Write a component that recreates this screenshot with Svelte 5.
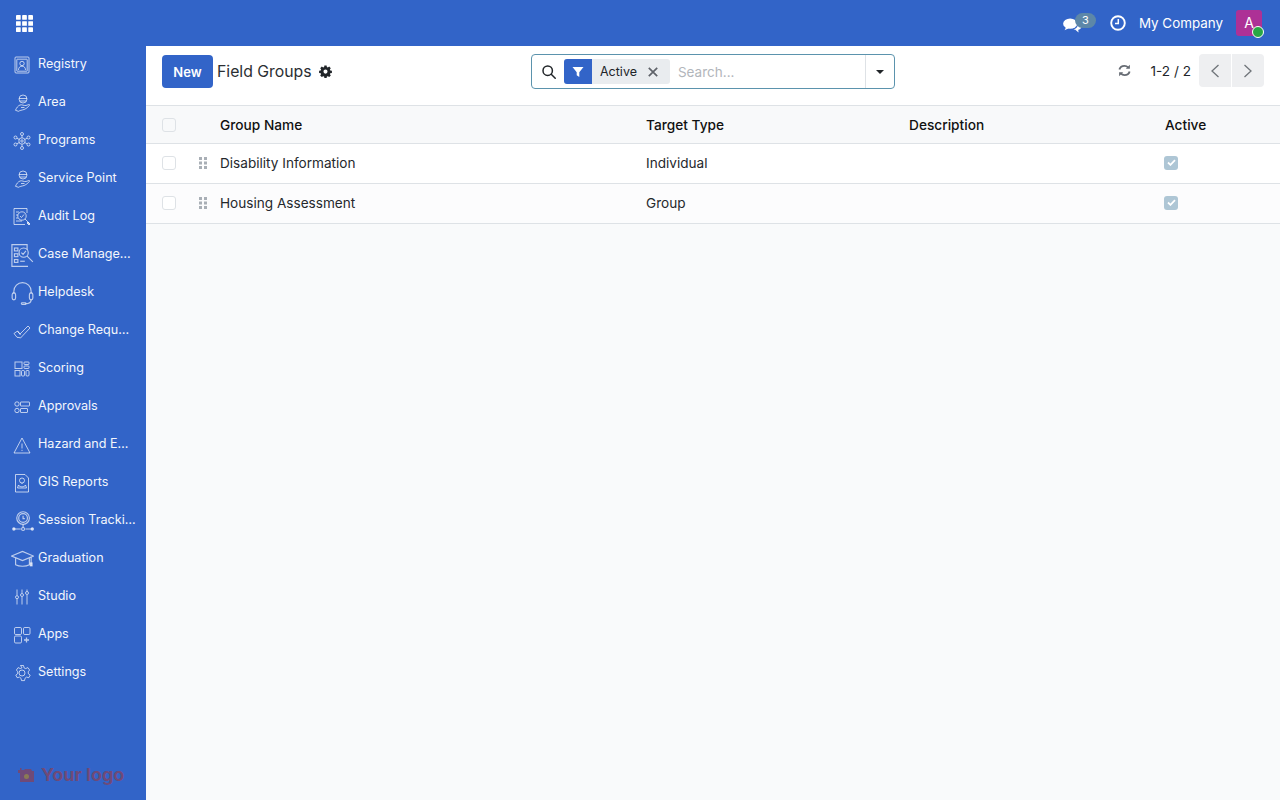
<script>
  const menu = [
    { label: 'Registry', icon: 'registry' },
    { label: 'Area', icon: 'hand' },
    { label: 'Programs', icon: 'programs' },
    { label: 'Service Point', icon: 'hand' },
    { label: 'Audit Log', icon: 'audit' },
    { label: 'Case Management', icon: 'case', big: true },
    { label: 'Helpdesk', icon: 'help', big: true },
    { label: 'Change Requests', icon: 'change' },
    { label: 'Scoring', icon: 'scoring' },
    { label: 'Approvals', icon: 'approvals' },
    { label: 'Hazard and Emergency', icon: 'hazard' },
    { label: 'GIS Reports', icon: 'gis' },
    { label: 'Session Tracking', icon: 'session', big: true },
    { label: 'Graduation', icon: 'grad', big: true },
    { label: 'Studio', icon: 'studio' },
    { label: 'Apps', icon: 'apps' },
    { label: 'Settings', icon: 'settings' }
  ];
  const rows = [
    { name: 'Disability Information', type: 'Individual' },
    { name: 'Housing Assessment', type: 'Group' }
  ];
</script>

<div class="app">
  <header class="topbar">
    <svg class="grid-icon" viewBox="0 0 18 18" width="18" height="18" fill="#fff">
      {#each [0, 6.5, 13] as y}
        {#each [0, 6.5, 13] as x}
          <rect {x} {y} width="5" height="5" rx="0.5" />
        {/each}
      {/each}
    </svg>
    <div class="systray">
      <div class="chat">
        <svg viewBox="0 0 20 16" width="19" height="15" fill="#fff">
          <ellipse cx="7.500" cy="6" rx="7.500" ry="5.500" />
          <path d="M3 10l-1.500 3 4.500-2zM13 12.500l3.500 3-.5-3.500z" />
          <path d="M15.500 5.500c2.500.6 4 2.300 4 3.800 0 1.700-1.500 3-3.800 3.400-1.200.2-3 .2-5-.7 3-.2 5.600-2.700 4.800-6.500z" />
        </svg>
        <span class="badge">3</span>
      </div>
      <svg class="clock" viewBox="0 0 16 16" width="16" height="16" fill="none" stroke="#fff">
        <circle cx="8" cy="8" r="6.800" stroke-width="1.900" />
        <path d="M8.300 4v4.500H5" stroke-width="1.500" />
      </svg>
      <span class="company">My Company</span>
      <div class="avatar">A<span class="online"></span></div>
    </div>
  </header>

  <div class="body">
    <nav class="sidebar">
      <ul class="menu">
        {#each menu as item}
          <li class="item">
            <span class="ico" class:big={item.big}>
              <svg viewBox="0 0 20 20" fill="none" stroke="currentColor" stroke-width="1">
                {#if item.icon === 'registry'}
                  <rect x="3" y="2" width="14" height="16" rx="1" />
                  <rect x="4.800" y="4.200" width="10.400" height="12" rx="0.500" />
                  <circle cx="10" cy="8.500" r="2.200" />
                  <path d="M6.500 15c0-2.500 1.500-3.800 3.500-3.800s3.500 1.300 3.500 3.800" />
                {:else if item.icon === 'hand'}
                  <circle cx="11" cy="6" r="4" />
                  <path d="M7 5.500h8M8 8h6" />
                  <path d="M8 12c2-.8 4 1 6 .5s3-1.500 3.500-.8-3 4-5.500 4.800-4 .8-5.500 1.800l-3-1c1-2.500 2.500-4.500 4.500-5.300z" />
                  <path d="M9 14.500h3.500" />
                {:else if item.icon === 'programs'}
                  <circle cx="10" cy="10" r="3.200" />
                  <circle cx="10" cy="10" r="1.200" />
                  <circle cx="10" cy="3" r="1.500" />
                  <circle cx="10" cy="17" r="1.500" />
                  <circle cx="3.500" cy="6.500" r="1.500" />
                  <circle cx="16.500" cy="6.500" r="1.500" />
                  <circle cx="3.500" cy="13.500" r="1.500" />
                  <circle cx="16.500" cy="13.500" r="1.500" />
                  <path d="M10 4.500v2.300M10 13.200v2.300M5 7.300l2.300 1.200M15 7.300l-2.300 1.200M5 12.700l2.300-1.200M15 12.700l-2.300-1.200" />
                {:else if item.icon === 'audit'}
                  <path d="M15 6V1.500H2v16h11" />
                  <circle cx="10" cy="9" r="4.200" />
                  <path d="M8 9l1.500 1.500L12 7.500M13 12l4.500 4.500" />
                  <path d="M4 5h3M4 8h2M4 11h2M4 14h6" />
                  <path d="M16 15l2 2-1 1-2-2z" fill="currentColor" />
                {:else if item.icon === 'case'}
                  <path d="M14 5V.5H.8v19h14" />
                  <rect x="3" y="3.500" width="3" height="2.500" />
                  <rect x="3" y="8.500" width="3" height="2.500" />
                  <rect x="3" y="13.500" width="3" height="2.500" />
                  <circle cx="11" cy="7.500" r="4" />
                  <path d="M9 7.500l1.500 1.500L13 6M14 10.500l5 5" />
                  <path d="M8 15h4" />
                {:else if item.icon === 'help'}
                  <path d="M2.500 10V8a7.500 7.500 0 0 1 15 0v2" />
                  <rect x="1" y="9.500" width="3" height="6" rx="1.500" />
                  <rect x="16" y="9.500" width="3" height="6" rx="1.500" />
                  <path d="M17.500 15.500c0 2.500-2 3.500-5 3.500" />
                  <rect x="9" y="18" width="4" height="1.500" rx="0.700" />
                {:else if item.icon === 'change'}
                  <path d="M2 12.500l3.500-2.500 2.500 3 8-8 2 2-9.500 10-1.500-.5-2-.2-3-3.800z" />
                  <path d="M5.500 10l3 4" />
                {:else if item.icon === 'scoring'}
                  <rect x="3" y="3" width="7" height="6.500" />
                  <rect x="12" y="3" width="5" height="2.500" rx="0.700" />
                  <rect x="12" y="7" width="5" height="2.500" rx="0.700" />
                  <rect x="3" y="11.500" width="5" height="5.500" />
                  <rect x="9.500" y="11.500" width="3" height="5.500" rx="1" />
                  <rect x="14" y="11.500" width="3" height="5.500" rx="1" />
                {:else if item.icon === 'approvals'}
                  <circle cx="5" cy="7" r="2.200" />
                  <circle cx="5" cy="13.500" r="2.200" />
                  <rect x="8.500" y="5" width="9" height="4" rx="0.500" />
                  <rect x="8.500" y="11.500" width="7" height="4" rx="0.500" />
                {:else if item.icon === 'hazard'}
                  <path d="M10 3L2 18h16z" />
                  <path d="M10 8.500v5M10 14.800v1.200" />
                {:else if item.icon === 'gis'}
                  <path d="M3.500 1.500H13l3.500 3.500v14h-13z" />
                  <circle cx="10" cy="7.500" r="2.500" />
                  <path d="M10 10v1M6.500 12c1 2.500 6 2.500 7 0l1 3H5.500z" />
                {:else if item.icon === 'session'}
                  <circle cx="10.500" cy="7" r="5.500" />
                  <circle cx="10.500" cy="7" r="3.800" />
                  <path d="M10.500 5v2.500H12M10.500 12.500v2.800M3 16.500h5.500M12.500 16.500h5.500" />
                  <circle cx="10.500" cy="16.500" r="1.300" />
                  <circle cx="2.500" cy="16.500" r="1" fill="currentColor" />
                  <circle cx="18.500" cy="16.500" r="1" fill="currentColor" />
                {:else if item.icon === 'grad'}
                  <path d="M.5 7L10 3l9.500 4-9.500 4z" />
                  <path d="M4 9v5.500c3 1.800 9 1.800 12 0V9M17.500 8v5" />
                  <rect x="16.800" y="13" width="1.500" height="2.500" fill="currentColor" />
                {:else if item.icon === 'studio'}
                  <path d="M5 2.500v6M5 12v5.500M10 2.500V6M10 10v7.500M15 2.500v2M15 8v9.500" />
                  <circle cx="5" cy="10.200" r="1.500" />
                  <circle cx="10" cy="8" r="1.500" />
                  <circle cx="15" cy="6" r="1.500" />
                {:else if item.icon === 'apps'}
                  <rect x="2.500" y="2.500" width="7" height="7" rx="1.200" />
                  <rect x="11.500" y="2.500" width="6.500" height="7" rx="1.200" />
                  <rect x="2.500" y="11" width="7" height="7" rx="1.200" />
                  <path d="M14.500 12.500v5M12 15h5" stroke-width="1.300" />
                {:else}
                  <circle cx="10" cy="10" r="3" />
                  <path d="M8.500 2.500h3l.5 2.300 1.700.8 2.200-1 1.700 2.400-1.400 1.800.2 2 1.800 1.300-1.400 2.600-2.300-.6-1.500 1.200-.5 2.300h-3l-.5-2.300-1.500-1.200-2.300.6-1.400-2.600 1.800-1.300.2-2-1.400-1.800 1.700-2.400 2.200 1 1.700-.8z" />
                {/if}
              </svg>
            </span>
            <span class="label">{item.label}</span>
          </li>
        {/each}
      </ul>
      <div class="logo">
        <svg viewBox="0 0 17 15" width="17" height="15">
          <path d="M1 2h2V0h1.500v2H7l1-1h6l1 2h2v11H3V5H1z" fill="#6f4a78" />
          <circle cx="9.500" cy="8.500" r="2.500" fill="#8a7a55" />
        </svg>
        <span>Your logo</span>
      </div>
    </nav>

    <main class="content">
      <div class="panel">
        <div class="left">
          <button class="new">New</button>
          <span class="title">Field Groups</span>
          <svg viewBox="0 0 14 14" width="13" height="13" fill="#212529">
            <path fill-rule="evenodd" d="M5.800.5h2.400l.3 1.700 1 .4L11 1.700l1.700 1.700-1 1.400.5 1 1.700.3v2.400l-1.700.3-.5 1 1 1.400-1.700 1.700-1.500-.9-1 .4-.3 1.700H5.800l-.3-1.700-1-.4-1.500.9-1.700-1.700 1-1.400-.5-1-1.700-.3V6.100l1.700-.3.5-1-1-1.400L3 1.700l1.500.9 1-.4zM7 4.900a2.200 2.200 0 1 0 0 4.400 2.200 2.200 0 0 0 0-4.400z" />
          </svg>
        </div>
        <div class="search">
          <svg class="loupe" viewBox="0 0 14 14" width="14" height="14" fill="none" stroke="#212529" stroke-width="1.500">
            <circle cx="5.700" cy="5.700" r="4.700" />
            <path d="M9.200 9.200l4 4" stroke-linecap="round" />
          </svg>
          <div class="facet">
            <span class="facet-ico">
              <svg viewBox="0 0 12 12" width="12" height="12" fill="#fff"><path d="M.5 1h11L7.300 6.300V11L4.700 9.300V6.300z" /></svg>
            </span>
            <span class="facet-text">Active</span>
            <svg class="facet-x" viewBox="0 0 10 10" width="10" height="10" stroke="#5f636a" stroke-width="1.700"><path d="M.8.800l8.400 8.400M9.200.800L.8 9.200" /></svg>
          </div>
          <span class="placeholder">Search...</span>
          <span class="caret-box"><span class="caret"></span></span>
        </div>
        <div class="right">
          <svg viewBox="0 0 14 14" width="13" height="13" fill="none" stroke="#666b73" stroke-width="2">
            <path d="M1.500 6C2.200 3.500 4.300 2 7 2c1.700 0 3 .7 4 1.800" />
            <path d="M12.500 8C11.800 10.500 9.700 12 7 12c-1.700 0-3-.7-4-1.800" />
            <path d="M12.800.8v4.400H8.400z" fill="#666b73" stroke="none" />
            <path d="M1.200 13.200V8.800h4.400z" fill="#666b73" stroke="none" />
          </svg>
          <span class="pager">1-2 / 2</span>
          <div class="pager-btns">
            <span class="pbtn"><svg viewBox="0 0 10 16" width="10" height="16" fill="none" stroke="#6f7479" stroke-width="1.300"><path d="M8.500 2L2 8l6.500 6" /></svg></span>
            <span class="pbtn"><svg viewBox="0 0 10 16" width="10" height="16" fill="none" stroke="#6f7479" stroke-width="1.300"><path d="M1.500 2L8 8l-6.500 6" /></svg></span>
          </div>
        </div>
      </div>

      <div class="row head">
        <span class="check"></span>
        <span class="cell-drag"></span>
        <span>Group Name</span>
        <span>Target Type</span>
        <span>Description</span>
        <span>Active</span>
      </div>
      {#each rows as row, i}
        <div class="row data" class:odd={i % 2 === 1}>
          <span class="check"></span>
          <span class="cell-drag">
            <svg viewBox="0 0 8 12" width="8" height="12" fill="#a9afb6">
              {#each [0, 4.500, 9] as y}
                <rect x="0" {y} width="3" height="3" />
                <rect x="5" {y} width="3" height="3" />
              {/each}
            </svg>
          </span>
          <span>{row.name}</span>
          <span>{row.type}</span>
          <span></span>
          <span class="on">
            <svg viewBox="0 0 10 8" width="9" height="7" fill="none" stroke="#fff" stroke-width="2"><path d="M1 4l2.800 2.700L9 1.300" /></svg>
          </span>
        </div>
      {/each}
    </main>
  </div>
</div>

<style>
  :global(body) {
    margin: 0;
    font-family: Inter, "Noto Sans", "Liberation Sans", sans-serif;
    color: #212529;
    font-size: 13px;
  }
  .app {
    width: 1280px;
    height: 800px;
    display: flex;
    flex-direction: column;
    overflow: hidden;
  }
  .topbar {
    height: 46px;
    flex: none;
    background: #3264c8;
    display: flex;
    align-items: center;
    justify-content: space-between;
    padding: 0 18px 0 16px;
    color: #fff;
  }
  .grid-icon {
    width: 17px;
    height: 17px;
  }
  .systray {
    display: flex;
    align-items: center;
  }
  .chat {
    display: flex;
    align-items: flex-start;
    height: 22px;
    margin-right: 14px;
  }
  .chat svg {
    margin-top: 6px;
  }
  .badge {
    width: 21px;
    height: 15px;
    margin-left: -7px;
    margin-top: 1px;
    border-radius: 8px;
    background: #5d87a8;
    font-size: 11px;
    line-height: 15px;
    text-align: center;
    color: #fff;
  }
  .clock {
    margin-right: 13px;
  }
  .company {
    font-size: 13.400px;
    margin-right: 13px;
  }
  .avatar {
    position: relative;
    width: 26px;
    height: 26px;
    border-radius: 3px;
    background: #ad3196;
    font-size: 14px;
    line-height: 26px;
    text-align: center;
  }
  .online {
    position: absolute;
    right: -2px;
    bottom: -2px;
    width: 10px;
    height: 10px;
    border-radius: 50%;
    background: #28a745;
    border: 1px solid #fff;
  }
  .body {
    flex: 1;
    display: flex;
    min-height: 0;
  }
  .sidebar {
    width: 146px;
    flex: none;
    background: #3264c8;
    display: flex;
    flex-direction: column;
    color: #fff;
  }
  .menu {
    list-style: none;
    margin: 0;
    padding: 0;
    margin-top: -1px;
  }
  .item {
    height: 38px;
    display: flex;
    align-items: center;
    padding-left: 12px;
  }
  .ico {
    width: 20px;
    height: 20px;
    flex: none;
    color: rgba(255, 255, 255, 0.68);
    margin: 2px 6px 0 0;
    display: flex;
    align-items: center;
    justify-content: center;
  }
  .ico svg {
    width: 20px;
    height: 20px;
    flex: none;
    display: block;
  }
  .ico.big svg {
    width: 23px;
    height: 23px;
  }
  .label {
    font-size: 12.600px;
    line-height: 18px;
    width: 98px;
    white-space: nowrap;
    overflow: hidden;
    text-overflow: ellipsis;
    color: #f3f6fc;
  }
  .logo {
    margin-top: auto;
    padding: 0 0 13px 17px;
    display: flex;
    align-items: center;
    gap: 7px;
    color: #6f4a78;
    font-size: 18px;
    font-weight: 700;
    font-family: Inter, "Liberation Sans", sans-serif;
    line-height: 24px;
  }
  .content {
    flex: 1;
    background: #f9fafb;
    min-width: 0;
  }
  .panel {
    height: 51px;
    padding: 8px 16px 0;
    background: #fff;
    border-bottom: 1px solid #dee2e6;
    display: grid;
    grid-template-columns: 1fr 364px 1fr;
    align-items: start;
  }
  .left {
    display: flex;
    align-items: center;
    margin-top: 1px;
  }
  .new {
    width: 51px;
    height: 33px;
    border: 0;
    border-radius: 4px;
    background: #3264c8;
    color: #fff;
    font: 600 13px Inter, sans-serif;
    padding: 0;
    margin-right: 4px;
  }
  .title {
    font-size: 15.800px;
    margin-right: 7px;
    color: #2b2f33;
  }
  .search {
    height: 33px;
    border: 1px solid #5b93ad;
    border-radius: 4px;
    display: flex;
    align-items: center;
    padding-left: 10px;
    background: #fff;
  }
  .loupe {
    margin-right: 8px;
  }
  .facet {
    height: 25px;
    display: flex;
    align-items: center;
    background: #e9ecef;
    border-radius: 3px;
    overflow: hidden;
  }
  .facet-ico {
    width: 28px;
    height: 25px;
    background: #3264c8;
    display: flex;
    align-items: center;
    justify-content: center;
  }
  .facet-text {
    font-size: 12.500px;
    margin: 0 11px 0 8px;
  }
  .facet-x {
    margin-right: 12px;
  }
  .placeholder {
    margin-left: 8px;
    flex: 1;
    color: #b2b6bb;
    font-size: 13.500px;
  }
  .caret-box {
    width: 28px;
    height: 33px;
    border-left: 1px solid #dee2e6;
    display: flex;
    align-items: center;
    justify-content: center;
  }
  .caret {
    border-left: 4px solid transparent;
    border-right: 4px solid transparent;
    border-top: 4px solid #212529;
  }
  .right {
    display: flex;
    align-items: center;
    justify-content: flex-end;
    height: 33px;
  }
  .pager {
    margin-left: 20px;
    margin-right: 8px;
    font-size: 13.600px;
  }
  .pager-btns {
    display: flex;
    gap: 1px;
  }
  .pbtn {
    width: 32px;
    height: 33px;
    background: #eeeff1;
    display: flex;
    align-items: center;
    justify-content: center;
  }
  .pbtn:first-child {
    border-radius: 4px 0 0 4px;
  }
  .pbtn:last-child {
    border-radius: 0 4px 4px 0;
  }
  .row {
    display: grid;
    grid-template-columns: 37px 21px 426px 263px 256px 1fr;
    align-items: center;
    padding-left: 16px;
    border-bottom: 1px solid #dee2e6;
    font-size: 13.600px;
  }
  .head {
    height: 37px;
    background: #f8f9fa;
    font-weight: 500;
    font-size: 13.700px;
    color: #111;
  }
  .data {
    height: 37px;
    padding-bottom: 2px;
    background: #fff;
    color: #25282c;
  }
  .data.odd {
    background: #fcfcfd;
  }
  .check {
    width: 12px;
    height: 12px;
    border: 1px solid #dee2e6;
    border-radius: 3px;
    background: #fff;
  }
  .head .check {
    background: #f8f9fa;
  }
  .cell-drag {
    display: flex;
    align-items: center;
    height: 12px;
  }
  .on {
    width: 14px;
    height: 14px;
    margin-left: -1px;
    border-radius: 3px;
    background: #aec6d5;
    display: flex;
    align-items: center;
    justify-content: center;
  }
</style>
